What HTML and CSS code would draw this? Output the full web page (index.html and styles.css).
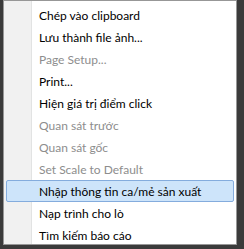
FILE: index.html
```html
<!DOCTYPE html>
<html lang="vi">
<head>
    <meta charset="UTF-8">
    <title>Menu</title>
    <link rel="stylesheet" href="styles.css">
</head>
<body>
    <div class="menu">
        <div class="item">Chép vào clipboard</div>
        <div class="item">Lưu thành file ảnh...</div>
        <div class="item disabled">Page Setup...</div>
        <div class="item">Print...</div>
        <div class="item">Hiện giá trị điểm click</div>
        <div class="item disabled">Quan sát trước</div>
        <div class="item disabled">Quan sát gốc</div>
        <div class="item disabled">Set Scale to Default</div>
        <div class="item active">Nhập thông tin ca/mẻ sản xuất</div>
        <div class="item">Nạp trình cho lò</div>
        <div class="item">Tìm kiếm báo cáo</div>
    </div>
</body>
</html>
```
FILE: styles.css
```css
body {
    margin: 0;
    background: #3b3b3b;
    font-family: Lato, "Noto Sans", sans-serif;
    font-size: 12px;
}
.menu {
    margin-left: 3px;
    width: 234px;
    height: 245px;
    border: 1px solid #979797;
    background: linear-gradient(to right, #f1f1f1 0, #f1f1f1 27px, #e2e3e3 27px, #e2e3e3 28px, #fff 28px);
    padding: 3px 2px;
    box-sizing: border-box;
}
.item {
    height: 22px;
    line-height: 22px;
    padding-left: 32px;
    color: #000;
    border: 1px solid transparent;
    box-sizing: border-box;
    border-radius: 2px;
}
.disabled {
    color: #8d8d8d;
}
.active {
    background: #cde4fa;
    border-color: #84acdd;
}
```
